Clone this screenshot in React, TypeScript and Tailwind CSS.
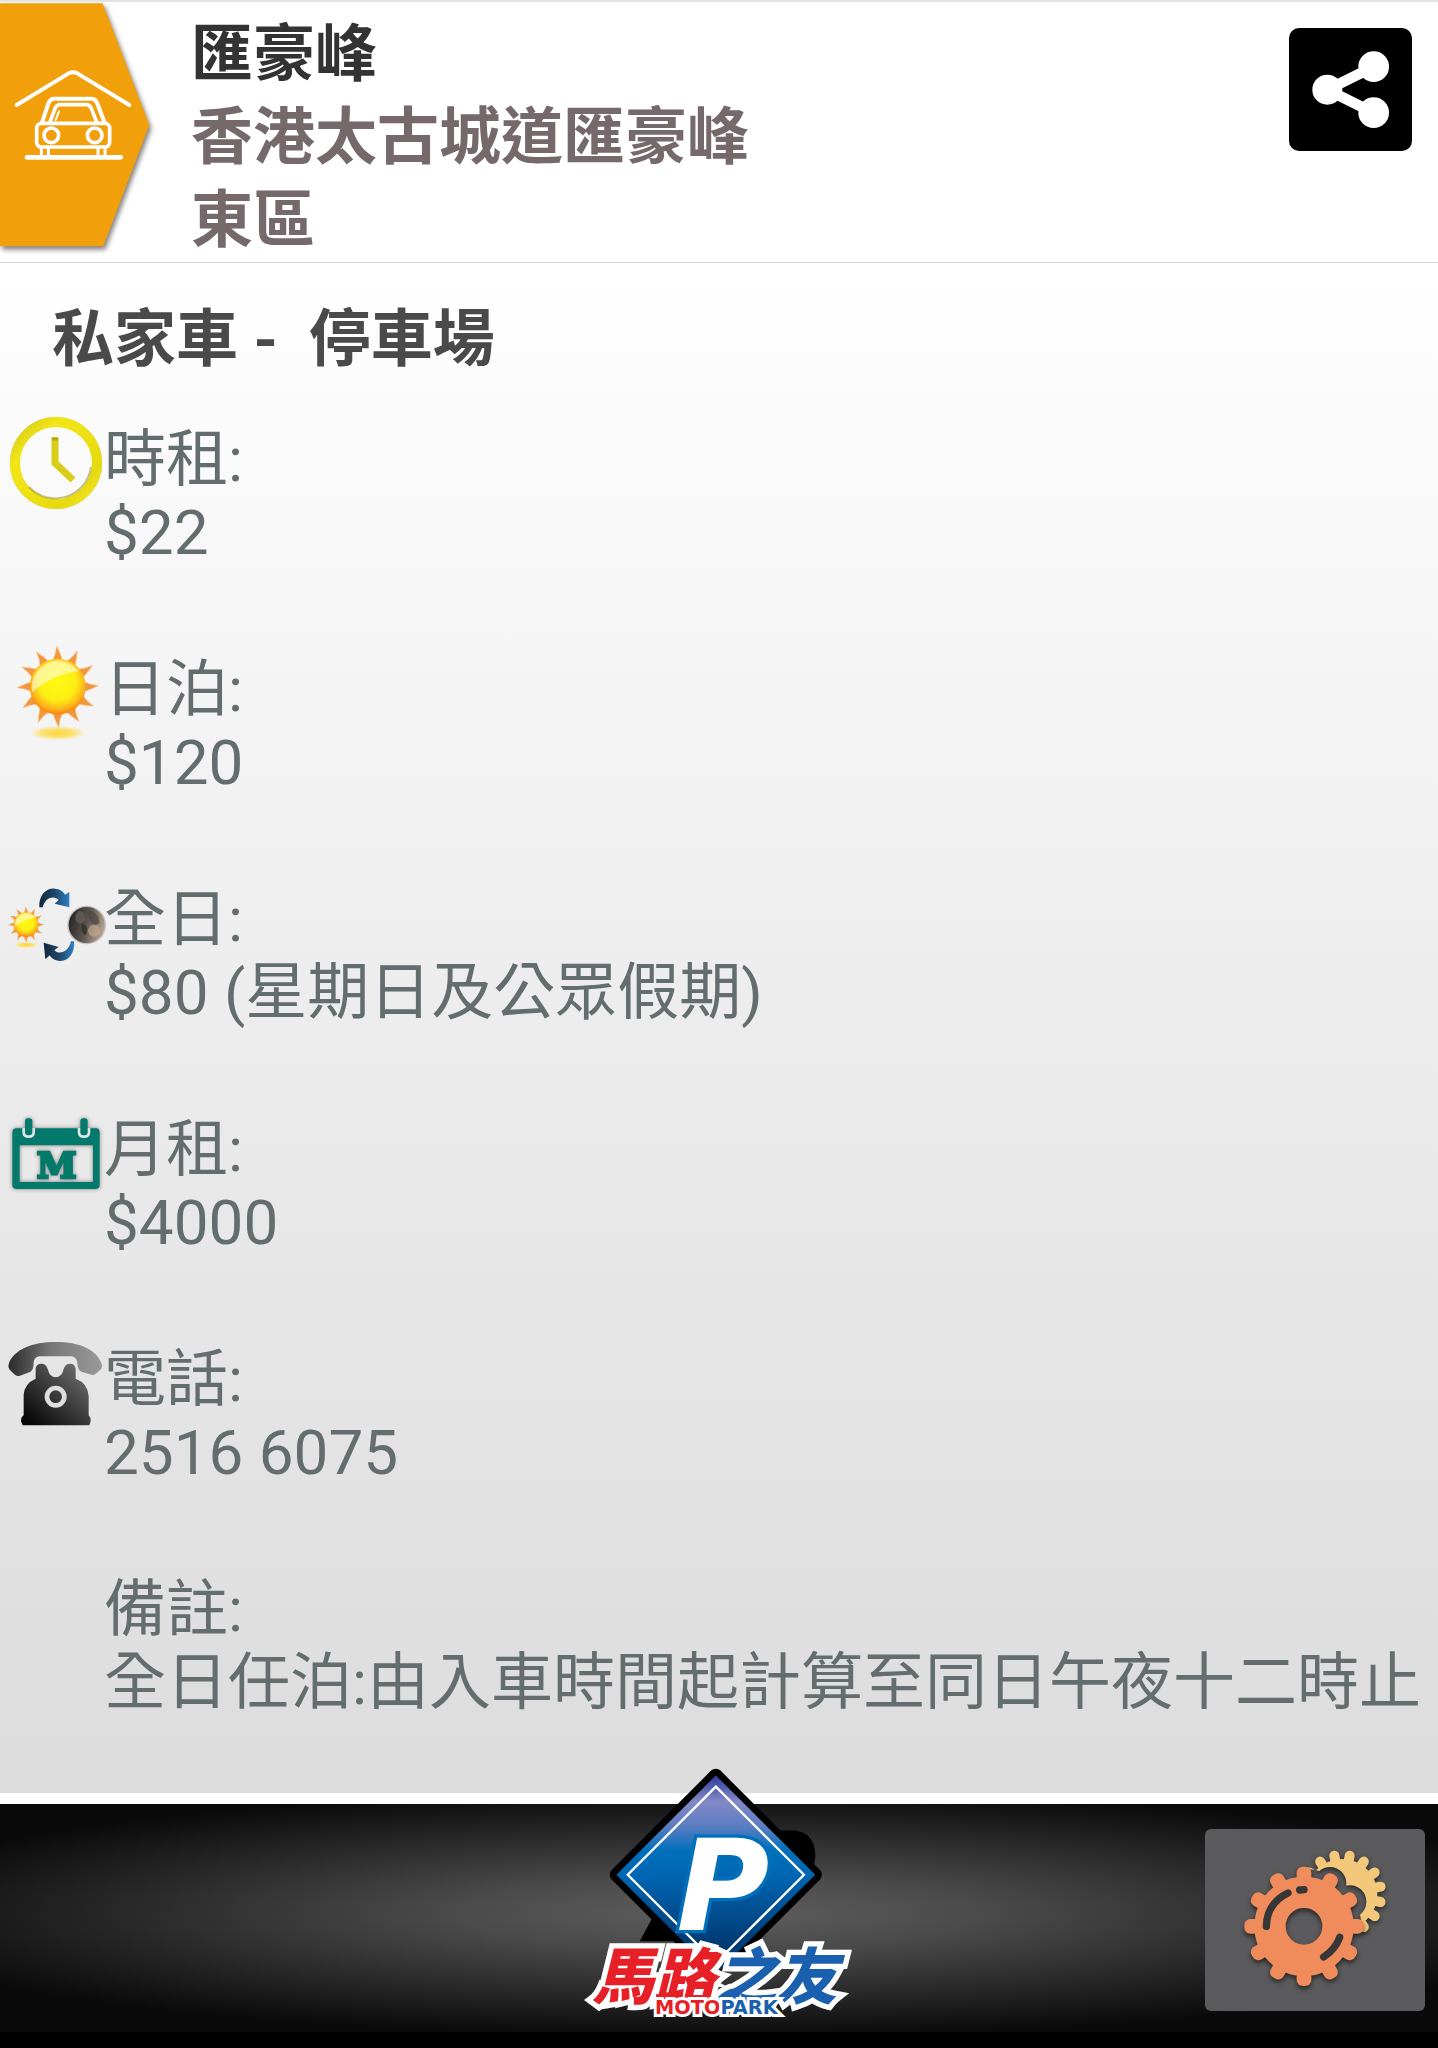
import type { ReactNode } from "react";

const rates = [
  { label: "時租:", value: "$22", icon: <ClockIcon /> },
  { label: "日泊:", value: "$120", icon: <SunIcon /> },
  { label: "全日:", value: "$80 (星期日及公眾假期)", icon: <DayNightIcon /> },
  { label: "月租:", value: "$4000", icon: <CalendarIcon /> },
  { label: "電話:", value: "2516 6075", icon: <PhoneIcon /> },
  { label: "備註:", value: "全日任泊:由入車時間起計算至同日午夜十二時止", icon: null },
];

const twelve = Array.from({ length: 12 }, (_, i) => i * 30);
const sixteen = Array.from({ length: 16 }, (_, i) => i * 22.5 + 11.25);

function ClockIcon() {
  return (
    <svg viewBox="0 0 93 93" className="w-full overflow-visible">
      <defs>
        <linearGradient id="clockRing" x1="0" y1="0" x2="1" y2="1">
          <stop offset="0" stopColor="#d3c71a" />
          <stop offset="0.25" stopColor="#f3e617" />
          <stop offset="0.8" stopColor="#e6da10" />
          <stop offset="1" stopColor="#f7ec2a" />
        </linearGradient>
      </defs>
      <circle cx="47" cy="46" r="45" fill="none" stroke="#a89d20" strokeWidth="2" opacity="0.45" />
      <circle cx="47" cy="46" r="41" fill="none" stroke="url(#clockRing)" strokeWidth="10" />
      <path d="M20 70A36 36 0 0 0 82 50" fill="none" stroke="#8f8516" strokeWidth="2" opacity="0.5" />
      <path d="M46 20V46L64 63" fill="none" stroke="#d9cd17" strokeWidth="7" />
      <path d="M43 22H49" fill="none" stroke="#8f8516" strokeWidth="3" opacity="0.5" />
    </svg>
  );
}

function Sun() {
  return (
    <g>
      <ellipse cx="173" cy="309" rx="86" ry="22" fill="url(#sunGlow)" />
      {twelve.map((angle) => (
        <path
          key={angle}
          d="M158 92Q168 72 170 48Q182 72 188 92Z"
          fill="#f2973f"
          stroke="#f7c58a"
          strokeWidth="2"
          transform={`rotate(${angle} 173 170)`}
        />
      ))}
      <circle cx="173" cy="170" r="84" fill="url(#sunBody)" />
      <path d="M97 186A78 78 0 0 1 236 124C180 130 140 150 97 186Z" fill="#fffde0" opacity="0.6" />
    </g>
  );
}

function SunIcon() {
  return (
    <svg viewBox="27 51 279 279" className="w-full overflow-visible">
      <defs>
        <radialGradient id="sunBody" cx="0.5" cy="0.42" r="0.6">
          <stop offset="0" stopColor="#fdfb12" />
          <stop offset="0.55" stopColor="#fdee14" />
          <stop offset="0.8" stopColor="#fdb51b" />
          <stop offset="1" stopColor="#f6760f" />
        </radialGradient>
        <radialGradient id="sunGlow">
          <stop offset="0" stopColor="#fcd43a" />
          <stop offset="0.6" stopColor="#fbe27a" />
          <stop offset="1" stopColor="#fbe89a" stopOpacity="0" />
        </radialGradient>
      </defs>
      <Sun />
    </svg>
  );
}

function DayNightIcon() {
  return (
    <svg viewBox="27 21 279 279" className="w-full overflow-visible">
      <defs>
        <linearGradient id="arrow">
          <stop offset="0" stopColor="#14293d" />
          <stop offset="0.5" stopColor="#1d4568" />
          <stop offset="1" stopColor="#3180c4" />
        </linearGradient>
        <linearGradient id="moon" x1="0" y1="0.3" x2="1" y2="0.6">
          <stop offset="0" stopColor="#262524" />
          <stop offset="0.5" stopColor="#5a544f" />
          <stop offset="1" stopColor="#b9a592" />
        </linearGradient>
      </defs>
      <g transform="translate(2 89) scale(0.44)">
        <Sun />
      </g>
      <path d="M118 112C116 76 138 54 164 56C180 57 190 64 195 74L208 66L208 112L164 101L176 90C164 76 136 80 128 112Z" fill="url(#arrow)" />
      <path d="M222 214C226 248 206 274 180 273C164 272 154 264 149 256L136 268L131 218L176 231L163 241C178 256 206 246 213 214Z" fill="url(#arrow)" />
      <circle cx="260" cy="165" r="58" fill="#8b8682" opacity="0.45" />
      <circle cx="260" cy="165" r="54" fill="url(#moon)" />
      <path d="M238 122Q262 128 252 154Q240 170 226 150Q224 132 238 122Z" fill="#6e6864" opacity="0.6" />
      <path d="M262 120Q300 128 298 160Q280 172 268 150Z" fill="#4b4643" opacity="0.7" />
      <path d="M246 160Q270 172 256 196Q240 190 246 160Z" fill="#2c2927" opacity="0.7" />
      <circle cx="282" cy="182" r="18" fill="#c9ae94" opacity="0.6" />
    </svg>
  );
}

function CalendarIcon() {
  return (
    <svg viewBox="27 21 279 279" className="w-full overflow-visible drop-shadow-[0_0_2px_rgba(0,0,0,0.45)]">
      <path
        fillRule="evenodd"
        fill="#03796b"
        d="M50 85H288Q299 85 299 98V254Q299 267 286 267H50Q37 267 37 254V98Q37 85 50 85ZM59 136V246H279V136Z"
      />
      <path d="M67 84V96Q67 114 86 114Q105 114 105 96V84ZM233 84V96Q233 114 252 114Q271 114 271 96V84Z" fill="#dfe5e4" />
      <rect x="75" y="55" width="22" height="51" rx="9" fill="#03796b" />
      <rect x="241" y="55" width="22" height="51" rx="9" fill="#03796b" />
      <text x="170" y="234" textAnchor="middle" className="fill-[#03796b] stroke-[#03796b] stroke-[8px] font-['DejaVu_Serif',serif] text-[108px] font-bold">
        M
      </text>
    </svg>
  );
}

function PhoneIcon() {
  return (
    <svg viewBox="27 51 279 279" className="w-full overflow-visible">
      <defs>
        <linearGradient id="handset">
          <stop offset="0" stopColor="#2b2b2b" />
          <stop offset="0.45" stopColor="#777" />
          <stop offset="1" stopColor="#999" />
        </linearGradient>
        <linearGradient id="phoneBody" x1="0" y1="1" x2="1" y2="0">
          <stop offset="0.1" stopColor="#080808" />
          <stop offset="0.5" stopColor="#3a3a3a" />
          <stop offset="1" stopColor="#7a7a7a" />
        </linearGradient>
      </defs>
      <path
        d="M26 132C42 88 96 66 168 66C238 66 290 88 305 132Q309 144 298 152L286 162Q280 167 270 163L244 155Q233 150 232 130Q231 112 214 109H118Q101 112 101 130Q101 150 90 156L60 167Q50 171 43 163L29 149Q23 142 26 132Z"
        fill="url(#handset)"
      />
      <path
        d="M107 176V146Q109 131 124 131Q138 131 143 147Q149 172 167 172Q185 172 191 147Q196 131 210 131Q225 131 227 147V176Q264 190 266 228V286Q273 292 272 304L268 316H68L63 304Q62 292 71 286V224Q74 190 107 176Z"
        fill="url(#phoneBody)"
      />
      <circle cx="167" cy="230" r="26" fill="none" stroke="#dedede" strokeWidth="14" />
    </svg>
  );
}

function CarParkBadge() {
  return (
    <svg viewBox="0 0 480 783" className="w-40 shrink-0 overflow-visible" role="img" aria-label="停車場">
      <path d="M0 10H308L448 375L310 739H0Z" fill="#f19f0a" className="drop-shadow-[6px_10px_8px_rgba(0,0,0,0.5)]" />
      <g fill="none" stroke="#fff" strokeWidth="12" strokeLinecap="round" strokeLinejoin="round">
        <path d="M50 315L206 220Q219 213 232 220L388 315" />
        <path d="M81 472H362" strokeWidth="14" />
        <path d="M126 368L146 308Q151 296 163 296H274Q286 296 291 308L314 368" />
        <path d="M150 366L164 328Q169 314 181 314H258Q270 314 275 328L290 366" strokeWidth="11" />
        <path d="M167 360L177 334" strokeWidth="6" />
        <rect x="110" y="370" width="219" height="71" rx="14" strokeWidth="11" />
        <circle cx="154" cy="406" r="22" strokeWidth="11" />
        <circle cx="284" cy="406" r="22" strokeWidth="11" />
        <path d="M124 444V468M145 444V468M294 444V468M315 444V468" strokeWidth="9" />
      </g>
    </svg>
  );
}

function ShareIcon() {
  return (
    <svg viewBox="88 84 369 369" className="w-full">
      <path d="M342 200L203 269L342 338" fill="none" stroke="#fff" strokeWidth="32" />
      <circle cx="203" cy="269" r="45" fill="#fff" />
      <circle cx="342" cy="200" r="46" fill="#fff" />
      <circle cx="342" cy="338" r="46" fill="#fff" />
    </svg>
  );
}

function GearsIcon() {
  return (
    <svg viewBox="75 148 660 547" className="w-full">
      <defs>
        <mask id="gearCut">
          <rect x="75" y="148" width="660" height="547" fill="#fff" />
          <circle cx="372" cy="440" r="172" fill="#000" />
          <circle cx="450" cy="311" r="49" fill="#000" />
          <circle cx="510" cy="366" r="49" fill="#000" />
        </mask>
      </defs>
      <g className="drop-shadow-[0_6px_8px_rgba(0,0,0,0.6)]">
        <g mask="url(#gearCut)" fill="#f3c87a">
          <circle cx="486" cy="344" r="106" />
          {sixteen.map((angle) => (
            <rect key={angle} x="471" y="211" width="30" height="60" rx="15" transform={`rotate(${angle} 486 344)`} />
          ))}
        </g>
      </g>
      <g className="drop-shadow-[0_8px_8px_rgba(0,0,0,0.6)]">
        <circle cx="372" cy="440" r="102" fill="none" stroke="#f08c5b" strokeWidth="94" />
        {twelve.map((angle) => (
          <rect key={angle} x="350" y="261" width="44" height="70" rx="18" fill="#f08c5b" transform={`rotate(${angle} 372 440)`} />
        ))}
      </g>
      <g fill="none" stroke="#373737" strokeWidth="22" strokeLinecap="round">
        <path d="M259 440Q260 372 324 340" />
        <path d="M359 331L372 330" />
        <path d="M479 473Q467 508 431 532" />
      </g>
    </svg>
  );
}

function Logo() {
  return (
    <svg viewBox="70 50 815 760" className="w-[272px] overflow-visible" role="img" aria-label="馬路之友 MotoPark">
      <defs>
        <linearGradient id="sign" x1="0" y1="0" x2="0" y2="1">
          <stop offset="0" stopColor="#2a3a9c" />
          <stop offset="0.13" stopColor="#8388c6" />
          <stop offset="0.25" stopColor="#5f7dc2" />
          <stop offset="0.38" stopColor="#0070bb" />
          <stop offset="0.5" stopColor="#0066b3" />
          <stop offset="0.85" stopColor="#003a72" />
        </linearGradient>
      </defs>
      <path d="M468 78L766 376L468 674L170 376Z" fill="#000" stroke="#000" strokeWidth="40" strokeLinejoin="round" />
      <path d="M650 243H700C750 245 774 285 764 340L700 420ZM275 510L240 575H360V510Z" fill="#000" />
      <path d="M468 78L766 376L468 674L170 376Z" fill="url(#sign)" />
      <path d="M468 112L732 376L468 640L204 376Z" fill="none" stroke="#fff" strokeWidth="7" />
      <text
        x="350"
        y="540"
        className="fill-white stroke-[#0070bb] stroke-[20px] font-['DejaVu_Sans',sans-serif] text-[380px] font-bold italic [paint-order:stroke]"
      >
        P
      </text>
      <g className="stroke-white stroke-[32px] font-['Noto_Sans_CJK_TC',sans-serif] text-[184px] font-black italic [paint-order:stroke] [stroke-linejoin:miter]">
        <text x="98" y="748">
          <tspan className="fill-[#e71f27]">馬路</tspan>
          <tspan className="fill-[#1b60af]">之友</tspan>
        </text>
      </g>
      <text
        x="286"
        y="794"
        className="stroke-white stroke-[18px] font-['DejaVu_Sans',sans-serif] text-[58px] font-bold [paint-order:stroke]"
      >
        <tspan className="fill-[#e71f27]">MOTO</tspan>
        <tspan className="fill-[#1b60af]">PARK</tspan>
      </text>
    </svg>
  );
}

function RateRow({ label, value, icon }: { label: string; value: string; icon: ReactNode }) {
  return (
    <div className="flex items-start pb-[78px] last:pb-0">
      <div className="w-[104px] shrink-0 pr-0.5 pl-[9px]">{icon}</div>
      <dl className="pt-1.5 leading-[73px] whitespace-nowrap">
        <dt>{label}</dt>
        <dd>{value}</dd>
      </dl>
    </div>
  );
}

export default function App() {
  return (
    <div className="flex min-h-screen flex-col overflow-hidden bg-white font-[Roboto,'Noto_Sans_CJK_TC',sans-serif] text-[62px]">
      <header className="flex items-start border-b border-[#d4d4d4] bg-white shadow-[inset_0_2px_0_#e4e4e4]">
        <CarParkBadge />
        <div className="ml-[31px] flex-1 pt-[13px] leading-[83px] font-bold text-[#75696c]">
          <h1 className="text-[#333]">匯豪峰</h1>
          <p>香港太古城道匯豪峰</p>
          <p>東區</p>
        </div>
        <button type="button" aria-label="分享" className="mt-7 mr-[26px] w-[123px] shrink-0 overflow-hidden rounded-[10px] bg-black">
          <ShareIcon />
        </button>
      </header>

      <main className="flex-1 bg-linear-to-b from-white via-[#ececec] to-[#dcdcdc]">
        <h2 className="pt-[38px] pb-[38px] pl-[52px] leading-[78px] font-bold whitespace-pre text-[#4a4a4a]">私家車 -  停車場</h2>
        <section className="text-[#636d6e]">
          {rates.map((rate) => (
            <RateRow key={rate.label} {...rate} />
          ))}
        </section>
      </main>

      <footer className="relative border-t-[11px] border-white bg-black pb-4">
        <div className="flex h-[228px] items-center justify-end bg-[#0a0a0a] bg-[radial-gradient(ellipse_62%_54%_at_50%_48%,#5e5e5e_0%,#4a4a4a_30%,#2a2a2a_65%,#0a0a0a_100%)] pt-1 pr-[13px]">
          <button type="button" aria-label="設定" className="w-[220px] overflow-hidden rounded-md bg-[#5b5b5d]">
            <GearsIcon />
          </button>
        </div>
        <a href="#" className="absolute bottom-7 left-1/2 -translate-x-1/2">
          <Logo />
        </a>
      </footer>
    </div>
  );
}
